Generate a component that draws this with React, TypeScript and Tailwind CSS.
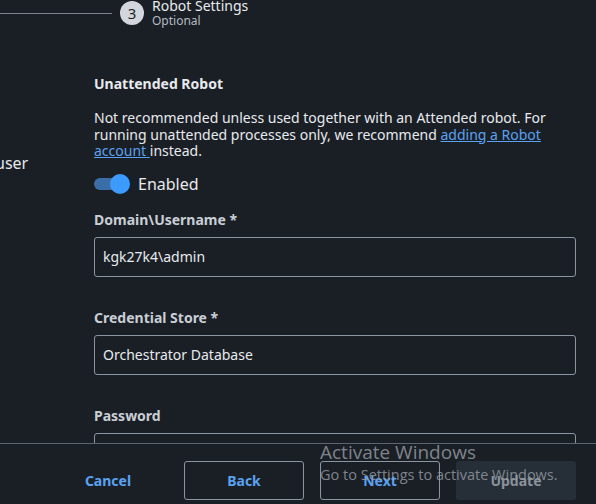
export default function App() {
  return (
    <div className="relative w-[596px] h-[504px] overflow-hidden bg-[#1a1f26] text-[#e8eaed] flex flex-col font-['Noto_Sans',sans-serif]">
      {/* stepper */}
      <div className="h-[30px] flex items-start shrink-0">
        <div className="mt-[13px] w-[112px] h-px bg-[#7c8591]" />
        <div className="ml-2 mt-px w-6 h-6 rounded-full bg-[#d3d7dd] text-[#1a1f26] text-[15px] flex items-center justify-center">
          3
        </div>
        <div className="ml-2 -mt-[3px] flex flex-col">
          <span className="text-[14px] leading-[18px]">Robot Settings</span>
          <span className="text-[12px] leading-[12px] text-[#b4bac2]">Optional</span>
        </div>
      </div>

      <div className="flex h-[413px] shrink-0 overflow-hidden">
        <div className="w-[94px] shrink-0 overflow-hidden">
          <div className="mt-[121px] -ml-[5px] text-[16px] leading-6">user</div>
        </div>
        <div className="w-[482px] pt-[44px] flex flex-col">
          <h3 className="shrink-0 text-[14px] leading-5 font-bold">Unattended Robot</h3>
          <p className="shrink-0 mt-4 text-[14px] leading-[16.5px]">
            Not recommended unless used together with an Attended robot. For running unattended processes only, we
            recommend{" "}
            <a className="text-[#5aa2f0] underline" href="#">
              adding a Robot account{" "}
            </a>
            instead.
          </p>
          <div className="shrink-0 mt-[14px] flex items-center h-5">
            <div className="relative w-[37px] h-5">
              <div className="absolute left-0 top-[4px] w-[30px] h-3 rounded-full bg-[#3a6ea8]" />
              <div className="absolute left-[16px] top-0 w-5 h-5 rounded-full bg-[#3d9bff]" />
            </div>
            <span className="ml-[7px] text-[16px]">Enabled</span>
          </div>

          <label className="shrink-0 mt-[16px] text-[14px] leading-5 font-bold text-[#c9ced5]">Domain\Username *</label>
          <div className="shrink-0 mt-[7px] h-10 rounded-[3px] border border-[#8b95a1] flex items-center px-2 text-[14px]">
            kgk27k4\admin
          </div>

          <label className="shrink-0 mt-[31px] text-[14px] leading-5 font-bold text-[#c9ced5]">Credential Store *</label>
          <div className="shrink-0 mt-[7px] h-10 rounded-[3px] border border-[#8b95a1] flex items-center px-2 text-[14px]">
            Orchestrator Database
          </div>

          <label className="shrink-0 mt-[31px] text-[14px] leading-5 font-bold text-[#c9ced5]">Password</label>
          <div className="mt-[7px] h-10 shrink-0 rounded-[3px] border border-[#8b95a1]" />
        </div>
      </div>

      <div className="flex-1 border-t border-[#5b6570] flex justify-end items-start gap-4 pt-[17px] pr-5">
        <button className="w-[120px] h-[39px] text-[14px] font-bold text-[#5aa2f0]">Cancel</button>
        <button className="w-[120px] h-[39px] rounded-[3px] border border-[#8b95a1] text-[14px] font-bold text-[#5aa2f0]">
          Back
        </button>
        <button className="w-[120px] h-[39px] rounded-[3px] border border-[#8b95a1] text-[14px] font-bold text-[#5aa2f0]">
          Next
        </button>
        <button className="w-[120px] h-[39px] rounded-[3px] bg-[#262f38] text-[14px] font-bold text-[#8a929b]">
          Update
        </button>
      </div>

      {/* windows activation watermark */}
      <div className="absolute left-[320px] top-[440px] pointer-events-none text-[#9a9fa6]/80 font-['Open_Sans',sans-serif]">
        <div className="text-[19px] leading-[24px]">Activate Windows</div>
        <div className="text-[14.5px] leading-[18px] mt-[2px]">Go to Settings to activate Windows.</div>
      </div>
    </div>
  );
}
